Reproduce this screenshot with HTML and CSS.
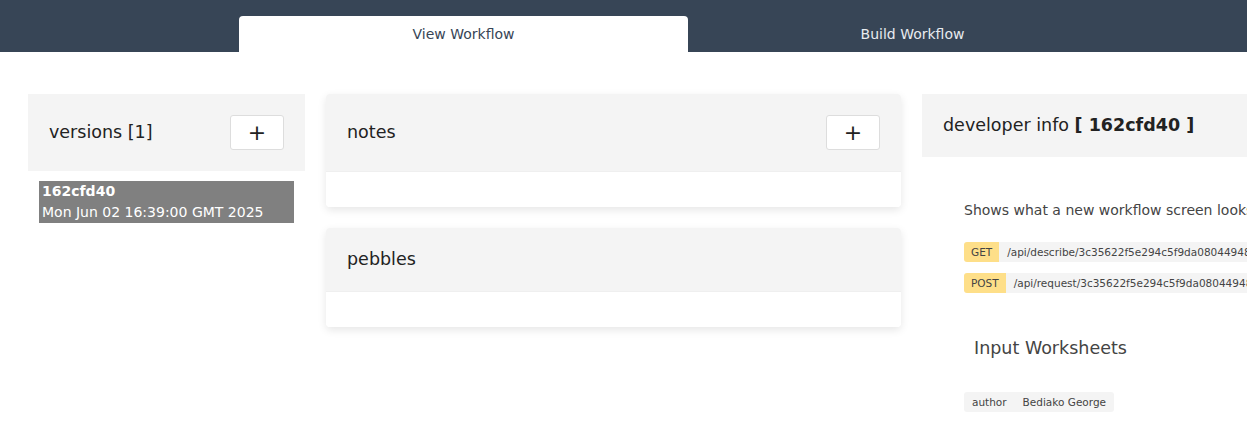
FILE: index.html
```html
<!DOCTYPE html>
<html lang="en">
<head>
  <meta charset="UTF-8" />
  <meta name="viewport" content="width=device-width, initial-scale=1.0" />
  <title>View Workflow</title>
  <link rel="stylesheet" href="styles.css">
</head>
<body>
  <header class="topbar">
    <nav class="tabs">
      <a class="tab active" href="#">View Workflow</a>
      <a class="tab" href="#">Build Workflow</a>
    </nav>
  </header>

  <main class="workflow">
    <section class="col col-versions">
      <div class="panel-head">
        <h3>versions [1]</h3>
        <button class="add-btn">+</button>
      </div>
      <ul class="version-list">
        <li class="version selected">
          <strong>162cfd40</strong>
          <span>Mon Jun 02 16:39:00 GMT 2025</span>
        </li>
      </ul>
    </section>

    <section class="col col-main">
      <div class="card">
        <div class="panel-head">
          <h3>notes</h3>
          <button class="add-btn">+</button>
        </div>
        <div class="card-body"></div>
      </div>
      <div class="card">
        <div class="panel-head">
          <h3>pebbles</h3>
        </div>
        <div class="card-body"></div>
      </div>
    </section>

    <section class="col col-dev">
      <div class="panel-head">
        <h3>developer info <b>[ 162cfd40 ]</b></h3>
      </div>
      <div class="dev-body">
        <p class="desc">Shows what a new workflow screen looks like</p>
        <div class="endpoint"><span class="method">GET</span><span class="path">/api/describe/3c35622f5e294c5f9da08044948b1e2a</span></div>
        <div class="endpoint"><span class="method">POST</span><span class="path">/api/request/3c35622f5e294c5f9da08044948b1e2a</span></div>
        <h4>Input Worksheets</h4>
        <div class="sheet"><span>author</span><span>Bediako George</span></div>
      </div>
    </section>
  </main>
</body>
</html>
```

FILE: styles.css
```css
body {
  margin: 0;
  font-family: "DejaVu Sans", sans-serif;
  color: #222;
  background: white;
  overflow: hidden;
}

.topbar {
  background: #374556;
  height: 52px;
  display: flex;
  align-items: flex-end;
}

.tabs {
  display: flex;
  padding-left: 239px;
}

.tab {
  width: 449px;
  height: 36px;
  display: flex;
  align-items: center;
  justify-content: center;
  font-size: 14px;
  color: #e8ebef;
  text-decoration: none;
  border-radius: 4px 4px 0 0;
}

.tab.active {
  background: white;
  color: #374556;
}

.workflow {
  display: flex;
  gap: 21px;
  padding: 42px 0 0 28px;
}

.col {
  flex-shrink: 0;
}

.col-versions {
  width: 277px;
}

.col-main {
  width: 575px;
  display: flex;
  flex-direction: column;
  gap: 21px;
}

.col-dev {
  width: 575px;
}

.panel-head {
  background: #f4f4f4;
  display: flex;
  justify-content: space-between;
  align-items: center;
  padding: 21px;
}

.panel-head h3 {
  margin: 0;
  font-size: 17.5px;
  font-weight: normal;
  line-height: 21px;
}

.panel-head h3 b {
  font-weight: bold;
}

.add-btn {
  width: 54px;
  height: 35px;
  background: white;
  border: 1px solid #ddd;
  border-radius: 3px;
  font-family: "DejaVu Sans", sans-serif;
  font-size: 22px;
  font-weight: normal;
  color: #222;
  line-height: 1;
  padding: 0;
  cursor: pointer;
}

.version-list {
  list-style: none;
  margin: 10px 11px 0;
  padding: 0;
}

.version {
  display: flex;
  flex-direction: column;
  padding: 0 3px;
  font-size: 14px;
  line-height: 21px;
  color: white;
}

.version.selected {
  background: #808080;
}

.card {
  border-radius: 4px;
  box-shadow: 0 3px 8px rgba(0, 0, 0, 0.1);
  overflow: hidden;
}

.card-body {
  height: 35px;
  background: white;
  border-top: 1px solid #efefef;
}

.dev-body {
  padding: 45px 0 0 42px;
  color: #444;
}

.desc {
  margin: 0 0 24px;
  font-size: 14px;
  white-space: nowrap;
}

.endpoint {
  display: flex;
  font-size: 10.5px;
  height: 20px;
  align-items: stretch;
  margin-bottom: 11px;
  white-space: nowrap;
}

.method {
  background: #fedf89;
  padding: 0 7px;
  display: flex;
  align-items: center;
  border-radius: 3px 0 0 3px;
  color: #444;
}

.path {
  background: #f4f4f4;
  padding: 0 8px;
  display: flex;
  align-items: center;
}

.dev-body h4 {
  margin: 43px 0 0 10px;
  font-size: 17.5px;
  font-weight: normal;
  line-height: 24px;
}

.sheet {
  display: inline-flex;
  gap: 16px;
  margin-top: 32px;
  background: #f4f4f4;
  border-radius: 3px;
  padding: 0 8px;
  height: 20px;
  align-items: center;
  font-size: 10.5px;
}
```
